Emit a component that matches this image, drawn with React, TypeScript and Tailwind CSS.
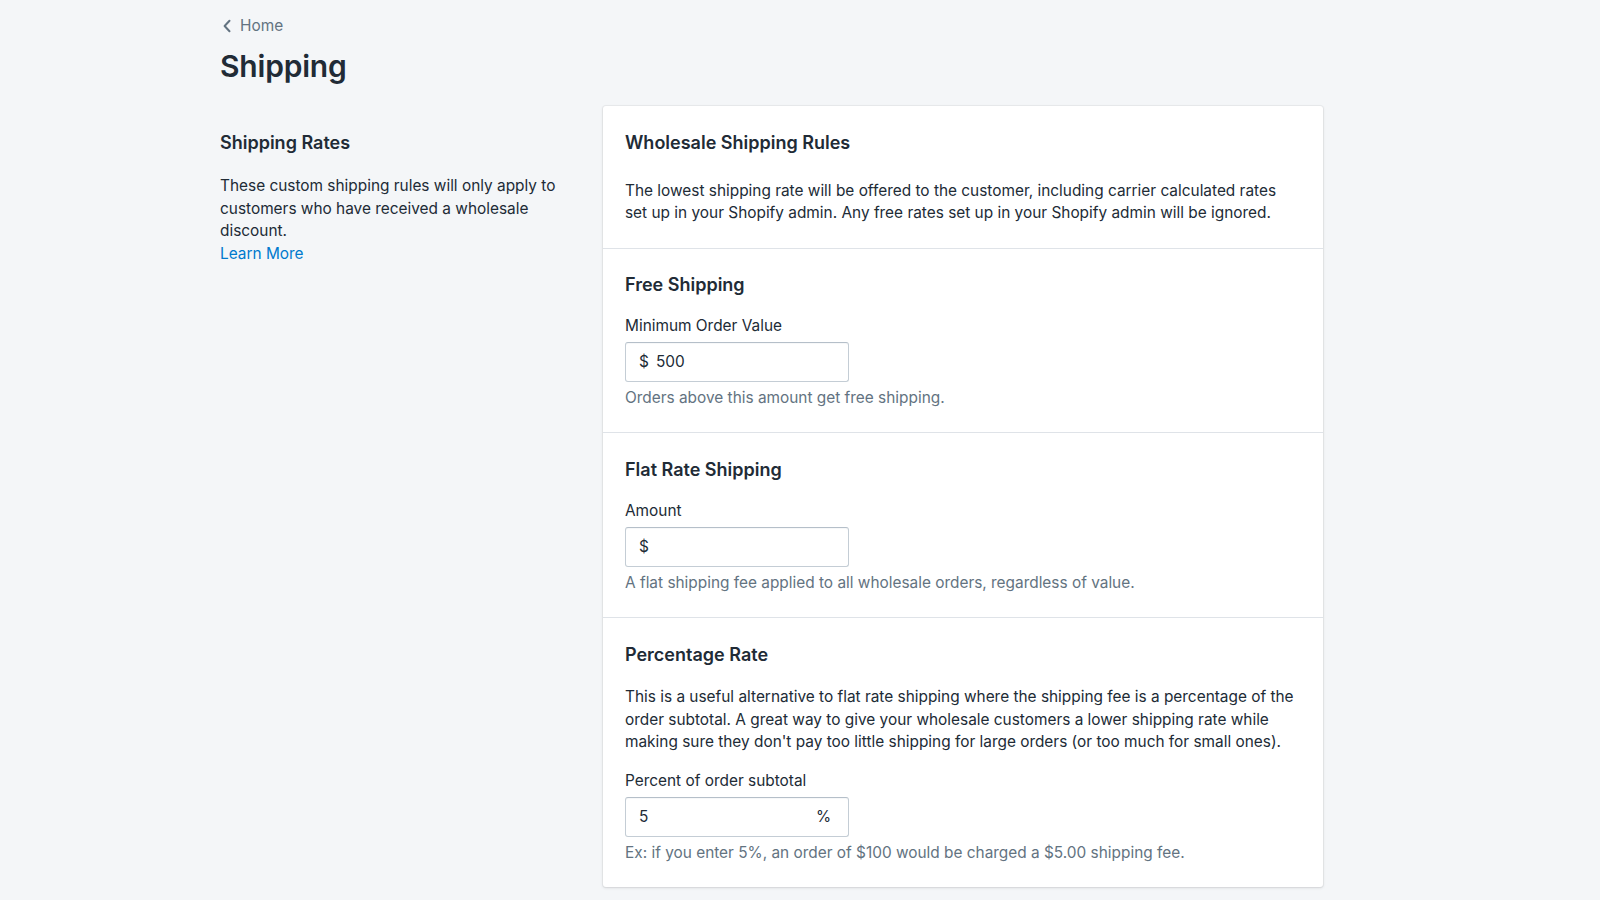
import React from "react";

const font = { fontFamily: "Inter, 'Noto Sans', sans-serif" };

function Input({ prefix, value, suffix }: { prefix?: string; value?: string; suffix?: string }) {
  return (
    <div className="mt-[5px] flex h-[40px] w-[224px] items-center rounded-[3px] border border-[#c4cdd5] border-t-[#b5bfc9] bg-white pl-[13px] pr-[17px] text-[15.4px] text-[#212b36] shadow-[inset_0_1px_0_0_rgba(99,115,129,0.05)]">
      {prefix && <span className="mr-[7px]">{prefix}</span>}
      <span className="flex-1">{value}</span>
      {suffix && <span>{suffix}</span>}
    </div>
  );
}

export default function App() {
  return (
    <div className="min-h-screen bg-[#f4f6f8] text-[#212b36] antialiased" style={font}>
      <div className="w-[1103px] ml-[220px] pt-[15px] pb-[40px]">
        <div className="flex h-[22px] items-center text-[15.4px] leading-[22px] text-[#637381]">
          <svg width="10" height="14" viewBox="0 0 10 14" className="ml-[2px] mr-[8px]">
            <polyline points="7.5,1.8 2.6,7 7.5,12.2" fill="none" stroke="#637381" strokeWidth="2" strokeLinecap="round" strokeLinejoin="round" />
          </svg>
          <span>Home</span>
        </div>
        <h1 className="mt-[11px] text-[30px] font-semibold leading-[36px] tracking-[-0.2px] text-[#212b36]">Shipping</h1>

        <div className="mt-[22px] flex gap-[20px]">
          <div className="w-[363px] pt-[22px]">
            <h2 className="text-[18px] font-semibold leading-[30px]">Shipping Rates</h2>
            <p className="mt-[17px] text-[15.4px] leading-[22.6px] text-[#212b36]">
              These custom shipping rules will only apply to customers who have received a wholesale discount.
            </p>
            <a className="block text-[15.4px] leading-[22.6px] text-[#007ace]">Learn More</a>
          </div>

          <div className="w-[720px] rounded-[3px] bg-white shadow-[0_0_0_1px_rgba(63,63,68,0.05),0_1px_3px_0_rgba(63,63,68,0.15)]">
            <section className="px-[22px] pt-[22px] pb-[24px]">
              <h2 className="text-[18px] font-semibold leading-[30px]">Wholesale Shipping Rules</h2>
              <p className="mt-[22px] text-[15.4px] leading-[22px]">
                The lowest shipping rate will be offered to the customer, including carrier calculated rates set up in your Shopify admin. Any free rates set up in your Shopify admin will be ignored.
              </p>
            </section>
            <section className="border-t border-[#dfe3e8] px-[22px] pt-[21px] pb-[23px]">
              <h2 className="text-[18px] font-semibold leading-[30px]">Free Shipping</h2>
              <div className="mt-[15px] text-[15.4px] leading-[22px]">Minimum Order Value</div>
              <Input prefix="$" value="500" />
              <p className="mt-[5px] text-[15.4px] leading-[22px] text-[#637381]">Orders above this amount get free shipping.</p>
            </section>
            <section className="border-t border-[#dfe3e8] px-[22px] pt-[22px] pb-[23px]">
              <h2 className="text-[18px] font-semibold leading-[30px]">Flat Rate Shipping</h2>
              <div className="mt-[15px] text-[15.4px] leading-[22px]">Amount</div>
              <Input prefix="$" value="" />
              <p className="mt-[5px] text-[15.4px] leading-[22px] text-[#637381]">A flat shipping fee applied to all wholesale orders, regardless of value.</p>
            </section>
            <section className="border-t border-[#dfe3e8] px-[22px] pt-[22px] pb-[23px]">
              <h2 className="text-[18px] font-semibold leading-[30px]">Percentage Rate</h2>
              <p className="mt-[16px] text-[15.4px] leading-[22.5px]">
                This is a useful alternative to flat rate shipping where the shipping fee is a percentage of the order subtotal. A great way to give your wholesale customers a lower shipping rate while making sure they don't pay too little shipping for large orders (or too much for small ones).
              </p>
              <div className="mt-[16px] text-[15.4px] leading-[22px]">Percent of order subtotal</div>
              <Input value="5" suffix="%" />
              <p className="mt-[5px] text-[15.4px] leading-[22px] text-[#637381]">Ex: if you enter 5%, an order of $100 would be charged a $5.00 shipping fee.</p>
            </section>
          </div>
        </div>
      </div>
    </div>
  );
}
